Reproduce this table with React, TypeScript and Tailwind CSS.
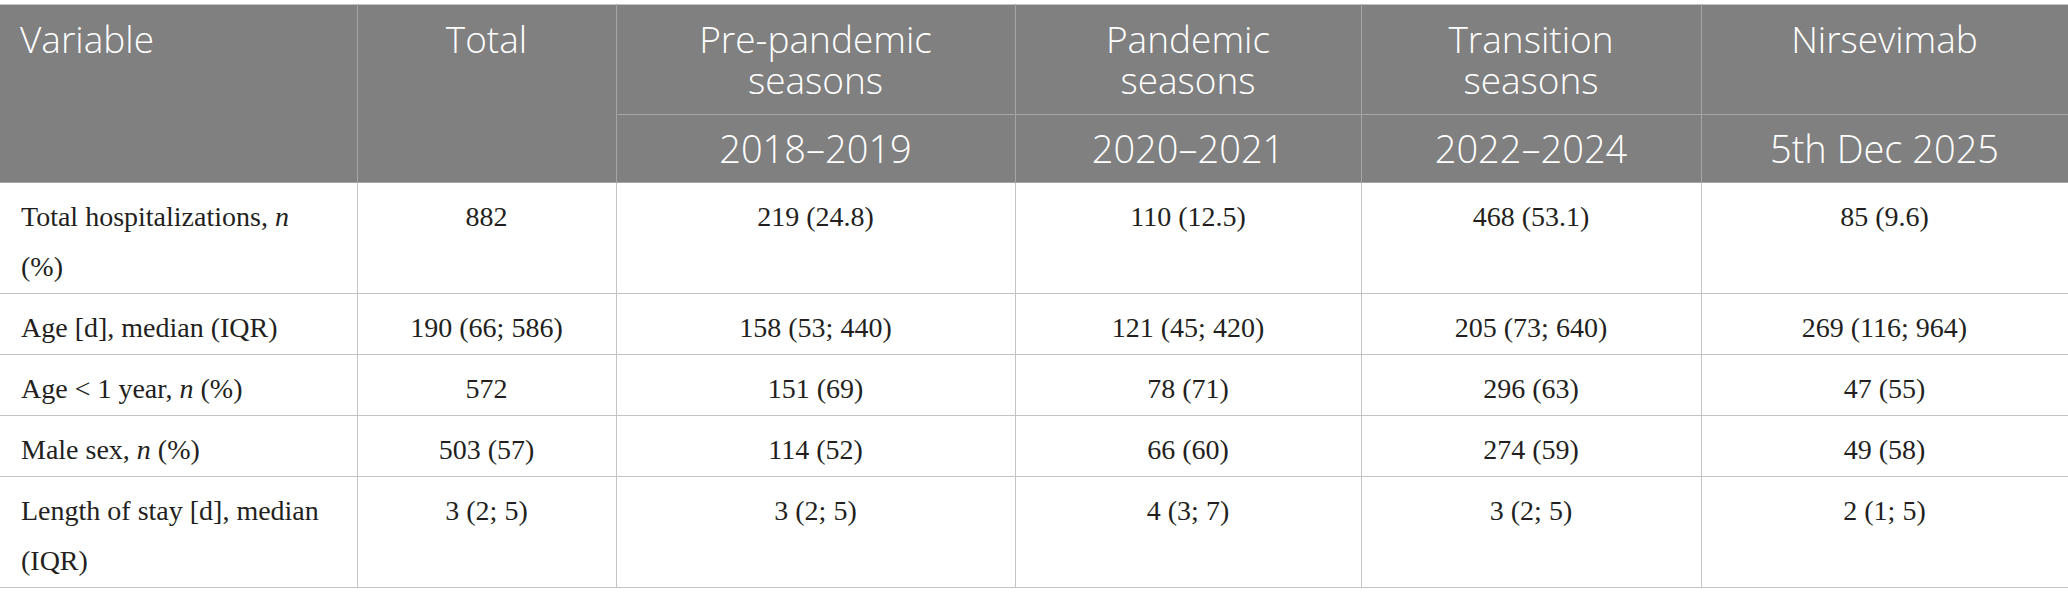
const rows = [
  {
    label: (
      <>
        Total hospitalizations, <i>n</i> (%)
      </>
    ),
    values: ['882', '219 (24.8)', '110 (12.5)', '468 (53.1)', '85 (9.6)'],
  },
  {
    label: <>Age [d], median (IQR)</>,
    values: ['190 (66; 586)', '158 (53; 440)', '121 (45; 420)', '205 (73; 640)', '269 (116; 964)'],
  },
  {
    label: (
      <>
        Age &lt; 1 year, <i>n</i> (%)
      </>
    ),
    values: ['572', '151 (69)', '78 (71)', '296 (63)', '47 (55)'],
  },
  {
    label: (
      <>
        Male sex, <i>n</i> (%)
      </>
    ),
    values: ['503 (57)', '114 (52)', '66 (60)', '274 (59)', '49 (58)'],
  },
  {
    label: <>Length of stay [d], median (IQR)</>,
    values: ['3 (2; 5)', '3 (2; 5)', '4 (3; 7)', '3 (2; 5)', '2 (1; 5)'],
  },
];

const groups = [
  { title: 'Pre-pandemic seasons', years: '2018–2019' },
  { title: 'Pandemic seasons', years: '2020–2021' },
  { title: 'Transition seasons', years: '2022–2024' },
  { title: 'Nirsevimab', years: '5th Dec 2025' },
];

const App = () => {
  return (
    <div className="min-h-screen bg-white pt-[4px]">
      <table className="w-[2068px] table-fixed border-collapse border-t border-[#c4c4c4]">
        <colgroup>
          <col className="w-[357px]" />
          <col className="w-[259px]" />
          <col className="w-[399px]" />
          <col className="w-[346px]" />
          <col className="w-[340px]" />
          <col className="w-[367px]" />
        </colgroup>
        <thead className="bg-[#7f807f] text-white font-['Open_Sans',sans-serif]">
          <tr className="text-[37px] leading-[41px]">
            <th
              rowSpan={2}
              className="border-r border-b border-[#a4a5a4] px-[20px] pt-[13px] text-left align-top font-[350]"
            >
              Variable
            </th>
            <th
              rowSpan={2}
              className="border-r border-b border-[#a4a5a4] px-[20px] pt-[13px] text-center align-top font-[350]"
            >
              Total
            </th>
            {groups.map((g, i) => (
              <th
                key={i}
                className="border-r border-b border-[#a4a5a4] px-[40px] pt-[13px] pb-[14px] text-center align-top font-[350]"
              >
                {g.title}
              </th>
            ))}
          </tr>
          <tr className="text-[38px] leading-[44px]">
            {groups.map((g, i) => (
              <th
                key={i}
                className="border-r border-b border-[#a4a5a4] px-[10px] pt-[11px] pb-[12px] text-center align-top font-[350]"
              >
                {g.years}
              </th>
            ))}
          </tr>
        </thead>
        <tbody className="font-['Liberation_Serif',serif] text-[28px] leading-[50px] text-[#231f20]">
          {rows.map((row, i) => (
            <tr key={i}>
              <td className="border-r border-b border-[#c4c4c4] px-[21px] pt-[9px] pb-[1px] align-top">
                {row.label}
              </td>
              {row.values.map((v, j) => (
                <td
                  key={j}
                  className="border-r border-b border-[#c4c4c4] px-[20px] pt-[9px] pb-[1px] text-center align-top"
                >
                  {v}
                </td>
              ))}
            </tr>
          ))}
        </tbody>
      </table>
    </div>
  );
};

export default App;
